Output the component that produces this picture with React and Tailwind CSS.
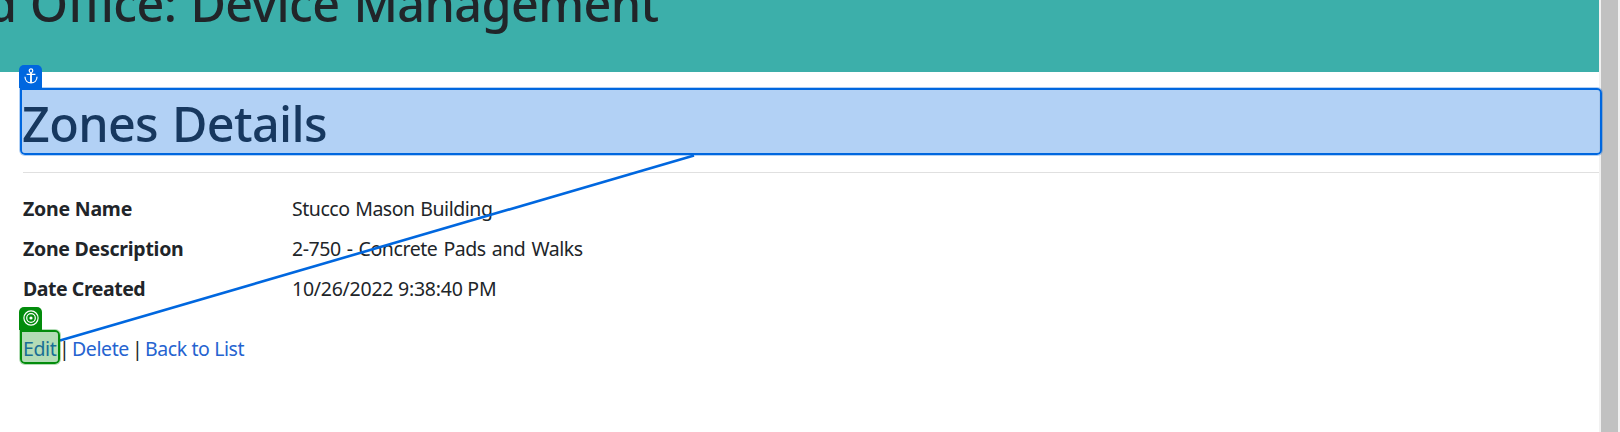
function AnchorIcon() {
  return (
    <svg className="h-4 w-4" viewBox="0 0 16 16" fill="none" stroke="white" strokeWidth="1.2">
      <circle cx="8" cy="2.7" r="1.8" />
      <path d="M8 4.5V15M3.6 6.3h8.8M2 8.8C2 12.6 4.6 14.9 8 14.9s6-2.3 6-6.1" />
      <path d="M8 5v9.5" strokeWidth="1.6" />
    </svg>
  );
}

function TargetIcon() {
  return (
    <svg className="h-4 w-4" viewBox="0 0 16 16" fill="none" stroke="white" strokeWidth="1.2">
      <circle cx="8" cy="8" r="7.1" />
      <circle cx="8" cy="8" r="4.3" />
      <circle cx="8" cy="8" r="1.6" fill="white" stroke="none" />
    </svg>
  );
}

const linkClass = "text-[#2563d0]";

export default function App() {
  return (
    <div className="relative flex h-[432px] w-full overflow-hidden bg-white font-['Noto_Sans',sans-serif] text-[19.5px] leading-[30px] whitespace-nowrap text-[#212529]">
      <div className="flex min-w-0 flex-1 flex-col">
        <header className="flex h-[72px] shrink-0 overflow-hidden bg-[#3cafaa]">
          <div className="-mt-[27px] -ml-[19px] text-[48.5px] leading-[60px] font-[540] tracking-[-0.6px] [word-spacing:2px]">
            <span className="mr-[13px] inline-block w-[36px] text-right tracking-normal">d</span>
            <span>Office: Device Management</span>
          </div>
        </header>
        <main className="flex flex-col pt-[19px] pl-[23px]">
          <h1 className="-ml-px h-[60px] pt-[2px] text-[48.5px] leading-[60px] font-[540] tracking-[-0.65px] [word-spacing:2px]">Zones Details</h1>
          <hr className="mt-[21px] h-px border-0 bg-[#e0e0e0]" />
          <dl className="grid grid-cols-[269px_1fr] gap-y-[10px] pt-[21px]">
            <dt className="font-bold tracking-[-0.22px]">Zone Name</dt>
            <dd className="tracking-[-0.46px] [word-spacing:1px]">Stucco Mason Building</dd>
            <dt className="font-bold tracking-[-0.26px]">Zone Description</dt>
            <dd className="tracking-[-0.42px] [word-spacing:1.3px]">2-750 - Concrete Pads and Walks</dd>
            <dt className="font-bold tracking-[-0.46px]">Date Created</dt>
            <dd className="tracking-[-0.25px]">10/26/2022 9:38:40 PM</dd>
          </dl>
          <div className="flex pt-[30px]">
            <a className={linkClass + " w-[36px] tracking-[-0.4px]"}>Edit</a>
            <span className="w-[13px]">|</span>
            <a className={linkClass + " w-[60px] tracking-[-0.4px]"}>Delete</a>
            <span className="w-[13px]">|</span>
            <a className={linkClass + " tracking-[-0.4px]"}>Back to List</a>
          </div>
        </main>
      </div>
      <div className="w-[21px] shrink-0 bg-[#f1f1f1] pr-[2px] pl-[2px]">
        <div className="h-full bg-[#c1c1c1]" />
      </div>

      <div className="absolute top-[65px] left-[19px] flex h-[23px] w-[23px] items-start justify-center rounded-t-[5px] bg-[#0067df] pt-[3px]">
        <AnchorIcon />
      </div>
      <div className="absolute top-[88px] left-[20px] h-[67px] w-[1582px] rounded-[5px] rounded-tl-none border-2 border-[#0067df] bg-[#0067df]/30 bg-clip-padding shadow-[0_0_0_1px_rgba(0,103,223,0.3)]" />
      <svg className="absolute top-0 left-0 h-[432px] w-[1620px]" fill="none">
        <path d="M60 340.5L694 155.5" stroke="#0067df" strokeWidth="2.6" />
      </svg>
      <div className="absolute top-[307px] left-[19px] flex h-[23px] w-[23px] items-start justify-center rounded-t-[5px] bg-[#038c0c] pt-[3px]">
        <TargetIcon />
      </div>
      <div className="absolute top-[330px] left-[20px] h-[34px] w-[40px] rounded-[5px] rounded-tl-none border-2 border-[#038c0c] bg-[#038c0c]/30 bg-clip-padding shadow-[0_0_0_1px_rgba(3,140,12,0.3)]" />
    </div>
  );
}
